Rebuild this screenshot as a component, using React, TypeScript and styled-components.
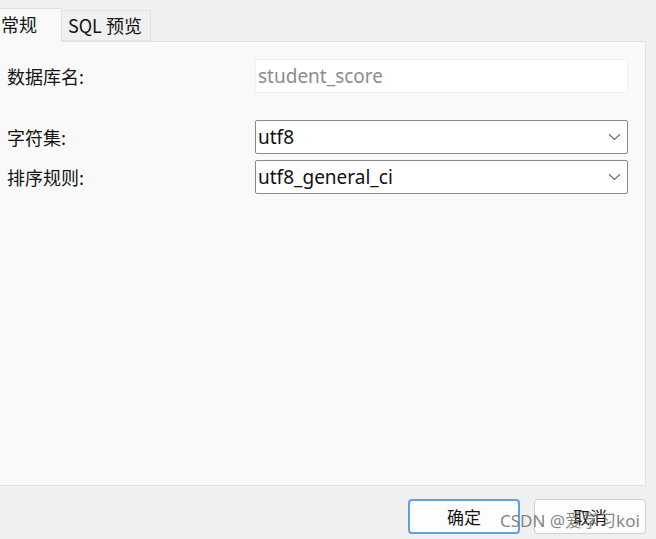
import React from "react";
import styled, { createGlobalStyle } from "styled-components";

const Global = createGlobalStyle`
  html, body { margin: 0; padding: 0; background: #f0f0f0; }
  body { font-family: "Noto Sans", "Noto Sans CJK SC", sans-serif; overflow: hidden; }
`;

const Window = styled.div`
  position: relative;
  width: 656px;
  height: 539px;
  display: flex;
  flex-direction: column;
  background: #f0f0f0;
  overflow: hidden;
`;

const TabBar = styled.div`
  height: 42px;
  display: flex;
  align-items: flex-end;
  margin-left: -12px;
  position: relative;
  z-index: 1;
`;

const Tab = styled.div<{ $active?: boolean }>`
  box-sizing: border-box;
  height: ${(p) => (p.$active ? "34px" : "31px")};
  margin-bottom: ${(p) => (p.$active ? "0" : "1px")};
  padding: 0 ${(p) => (p.$active ? "12px" : "6px")} ${(p) => (p.$active ? "4px" : "2px")};
  display: flex;
  align-items: center;
  font-size: 18px;
  color: #141414;
  background: ${(p) => (p.$active ? "#f9f9f9" : "#f0f0f0")};
  border: 1px solid #e2e2e2;
  border-bottom: ${(p) => (p.$active ? "none" : "1px solid #e2e2e2")};
  width: ${(p) => (p.$active ? "74px" : "90px")};
  margin-left: ${(p) => (p.$active ? "0" : "-1px")};
  font-family: "Noto Sans CJK SC", sans-serif;
  line-height: 1;
  white-space: nowrap;
`;

const Panel = styled.div`
  box-sizing: border-box;
  margin-left: -1px;
  margin-top: -1px;
  width: 647px;
  height: 445px;
  background: #f9f9f9;
  border: 1px solid #e2e2e2;
  padding: 17px 0 0 7px;
  display: flex;
  flex-direction: column;
`;

const Row = styled.div<{ $gap: number }>`
  display: grid;
  grid-template-columns: 248px 373px;
  height: 34px;
  align-items: center;
  margin-top: ${(p) => p.$gap}px;
`;

const Label = styled.div`
  font-size: 18px;
  color: #141414;
  font-family: "Noto Sans CJK SC", sans-serif;
  line-height: 34px;
`;

const Field = styled.div<{ $disabled?: boolean }>`
  box-sizing: border-box;
  height: 34px;
  background: #ffffff;
  border: 1px solid ${(p) => (p.$disabled ? "#f0f0f0" : "#8a8a8a")};
  border-radius: 2px;
  display: flex;
  align-items: center;
  justify-content: space-between;
  padding: 0 6px 0 2px;
  font-size: 19px;
  color: ${(p) => (p.$disabled ? "#8c8c8c" : "#111111")};
  font-family: "Noto Sans", "Noto Sans CJK SC", sans-serif;
`;

const Footer = styled.div`
  display: flex;
  justify-content: flex-end;
  gap: 14px;
  padding: 13px 10px 0 0;
`;

const Button = styled.div<{ $primary?: boolean }>`
  box-sizing: border-box;
  width: 112px;
  height: 35px;
  border-radius: 4px;
  background: #fdfdfd;
  border: ${(p) => (p.$primary ? "2px solid #5ea0e6" : "1px solid #d0d0d0")};
  display: flex;
  align-items: center;
  justify-content: center;
  font-size: 17px;
  color: #141414;
  font-family: "Noto Sans CJK SC", sans-serif;
`;

const Watermark = styled.div`
  position: absolute;
  left: 500px;
  top: 507px;
  font-size: 17px;
  color: rgba(110, 110, 110, 0.85);
  font-family: "Noto Sans", "Noto Sans CJK SC", sans-serif;
  white-space: nowrap;
  pointer-events: none;
`;

const Chevron = () => (
  <svg width="13" height="8" viewBox="0 0 13 8" fill="none">
    <path d="M1 1.2 L6.5 6.5 L12 1.2" stroke="#707070" strokeWidth="1.2" />
  </svg>
);

export default function App() {
  return (
    <Window>
      <Global />
      <TabBar>
        <Tab $active>常规</Tab>
        <Tab>SQL 预览</Tab>
      </TabBar>
      <Panel>
        <Row $gap={0}>
          <Label>数据库名:</Label>
          <Field $disabled>student_score</Field>
        </Row>
        <Row $gap={27}>
          <Label>字符集:</Label>
          <Field>
            <span>utf8</span>
            <Chevron />
          </Field>
        </Row>
        <Row $gap={6}>
          <Label>排序规则:</Label>
          <Field>
            <span>utf8_general_ci</span>
            <Chevron />
          </Field>
        </Row>
      </Panel>
      <Footer>
        <Button $primary>确定</Button>
        <Button>取消</Button>
      </Footer>
      <Watermark>CSDN @爱学习koi</Watermark>
    </Window>
  );
}
